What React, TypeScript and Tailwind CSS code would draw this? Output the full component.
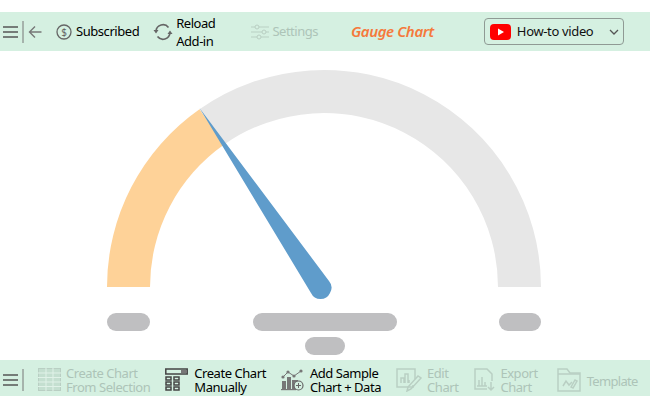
import React from 'react';

const font = "font-['Noto_Sans',sans-serif]";

function Hamburger() {
  return (
    <svg width="24" height="24" viewBox="0 0 24 24" className="shrink-0">
      <path d="M3 7h15M3 12h15M3 17h15" stroke="#555" strokeWidth="1.6" fill="none" />
      <path d="M23 1v22" stroke="#777" strokeWidth="1" fill="none" />
    </svg>
  );
}

function BottomItem({ label, active, icon, className }: { label: React.ReactNode; active?: boolean; icon: React.ReactNode; className: string }) {
  return (
    <div className={`flex items-center shrink-0 ${className}`}>
      {icon}
      <div className={`text-[13px] leading-[14px] tracking-[-0.45px] whitespace-nowrap ${active ? 'text-black' : 'text-[#adc4b8]'}`}>{label}</div>
    </div>
  );
}

export default function App() {
  return (
    <div className={`w-[650px] h-[407px] bg-white flex flex-col pt-3 overflow-hidden ${font}`}>
      {/* top ribbon */}
      <div className="h-[39px] bg-[#d5f0e1] flex items-center shrink-0">
        <div className="w-[24px]"><Hamburger /></div>
        <svg width="14" height="14" viewBox="0 0 14 14" className="ml-[4px]">
          <path d="M13.5 7H1.5M7 1.5L1.5 7 7 12.5" stroke="#777" strokeWidth="1.4" fill="none" />
        </svg>
        <svg width="16" height="16" viewBox="0 0 16 16" className="ml-[14px]">
          <circle cx="8" cy="8" r="7" stroke="#666" strokeWidth="1.3" fill="none" />
          <text x="8" y="11.5" textAnchor="middle" fontSize="10" fill="#666">$</text>
        </svg>
        <span className="ml-[4px] text-[13px] tracking-[-0.45px] text-black">Subscribed</span>
        <svg width="20" height="18" viewBox="0 0 20 18" className="ml-[14px]">
          <path d="M3 8a7 7 0 0 1 12.5-3.5M17 10a7 7 0 0 1-12.5 3.5" stroke="#666" strokeWidth="1.7" fill="none" />
          <path d="M0.5 7h5L3 10.5zM19.5 11h-5L17 7.5z" fill="#666" />
        </svg>
        <div className="ml-[3px] text-[13px] leading-[18px] tracking-[-0.45px] text-black">Reload<br />Add-in</div>
        <svg width="18" height="16" viewBox="0 0 18 16" className="ml-[36px]">
          <path d="M0 3h18M0 8h18M0 13h18" stroke="#b9cfc3" strokeWidth="1.2" />
          <circle cx="6" cy="3" r="2" fill="#d5f0e1" stroke="#b9cfc3" />
          <circle cx="13" cy="8" r="2" fill="#d5f0e1" stroke="#b9cfc3" />
          <circle cx="8" cy="13" r="2" fill="#d5f0e1" stroke="#b9cfc3" />
        </svg>
        <span className="ml-[3px] text-[13px] tracking-[-0.5px] text-[#adc4b8]">Settings</span>
        <span className="ml-[33px] text-[15px] italic font-semibold tracking-[-0.4px] text-[#f5793b]">Gauge Chart</span>
        <div className="ml-[50px] w-[140px] h-[27px] border border-[#8f9a94] rounded-[4px] flex items-center pl-[5px]">
          <svg width="21" height="16" viewBox="0 0 21 16">
            <rect width="21" height="16" rx="4" fill="#ff0000" />
            <path d="M8 4.5l6 3.5-6 3.5z" fill="#fff" />
          </svg>
          <span className="ml-[6px] text-[13px] tracking-[-0.35px] text-[#111]">How-to video</span>
          <svg width="10" height="6" viewBox="0 0 10 6" className="ml-[16px]">
            <path d="M1 1l4 4 4-4" stroke="#555" strokeWidth="1.3" fill="none" />
          </svg>
        </div>
      </div>

      {/* chart area */}
      <div className="flex-1 min-h-0">
        <svg width="650" height="309" viewBox="0 51 650 309" className="block">
          <path d="M199.5 109.2A217 217 0 0 1 541 287H498A174 174 0 0 0 224.2 144.5Z" fill="#e7e7e7" />
          <path d="M107 287A217 217 0 0 1 199.5 109.2L224.2 144.5A174 174 0 0 0 150 287Z" fill="#fed298" />
          <path d="M199.5 108L329 281A10.5 10.5 0 0 1 330 293A10.5 10.5 0 0 1 311 293Z" fill="#5f9ccb" />
          <rect x="107" y="313" width="43" height="18" rx="9" fill="#bfbfc1" />
          <rect x="253" y="313" width="144" height="18" rx="9" fill="#bfbfc1" />
          <rect x="499" y="313" width="42" height="18" rx="9" fill="#bfbfc1" />
          <rect x="305" y="337" width="40" height="18" rx="9" fill="#bfbfc1" />
        </svg>
      </div>

      {/* bottom ribbon */}
      <div className="h-[36px] bg-[#d5f0e1] flex items-center shrink-0 mb-[11px] pt-[3px]">
        <div className="w-[24px]"><Hamburger /></div>
        <BottomItem
          className="ml-[14px]"
          label={<>Create Chart<br />From Selection</>}
          icon={
            <svg width="23" height="23" viewBox="0 0 23 23" className="mr-[5px]">
              <rect x="0.5" y="0.5" width="22" height="22" fill="#c4dfd0" stroke="#b9cfc3" />
              <path d="M0 5h23M0 9.5h23M0 14h23M0 18.5h23M8 0v23M15 0v23" stroke="#e0f2e8" strokeWidth="1" />
            </svg>
          }
        />
        <BottomItem
          className="ml-[15px]"
          active
          label={<>Create Chart<br />Manually</>}
          icon={
            <svg width="23" height="23" viewBox="0 0 23 23" className="mr-[6px]">
              <g fill="none" stroke="#444" strokeWidth="1.5">
                <rect x="0.8" y="1" width="21.4" height="5" />
                <rect x="1" y="9" width="5" height="3" />
                <rect x="9" y="9" width="5" height="3" />
                <rect x="1" y="14" width="5" height="3" />
                <rect x="9" y="14" width="5" height="3" />
                <rect x="1" y="19" width="5" height="3" />
                <rect x="9" y="19" width="5" height="3" />
              </g>
              <rect x="16" y="2" width="6" height="3" fill="#777" />
            </svg>
          }
        />
        <BottomItem
          className="ml-[15px]"
          active
          label={<>Add Sample<br />Chart + Data</>}
          icon={
            <svg width="23" height="23" viewBox="0 0 23 23" className="mr-[6px]">
              <path d="M2 9l5-5 6 4 7-5" stroke="#777" strokeWidth="1" fill="none" />
              <g fill="#777">
                <circle cx="2" cy="9" r="1.6" />
                <circle cx="7" cy="4" r="1.6" />
                <circle cx="13" cy="8" r="1.6" />
                <circle cx="20" cy="3" r="1.6" />
                <rect x="1" y="13" width="4" height="8" />
                <rect x="6" y="9" width="4" height="12" />
                <rect x="11" y="12" width="6" height="9" />
                <rect x="0" y="21" width="15" height="1.2" />
              </g>
              <circle cx="17.5" cy="17.5" r="4.5" fill="#d5f0e1" stroke="#666" strokeWidth="1.2" />
              <path d="M15 17.5h5M17.5 15v5" stroke="#666" strokeWidth="1" />
            </svg>
          }
        />
        <BottomItem
          className="ml-[15px]"
          label={<>Edit<br />Chart</>}
          icon={
            <svg width="26" height="24" viewBox="0 0 26 24" className="mr-[5px]">
              <g fill="none" stroke="#b9cfc3" strokeWidth="1.5">
                <path d="M17 17v2H1V1h18v10" />
                <path d="M5 15v-5h3v5M9 15V6h3v9M13 15v-3" />
                <path d="M25 10l-10 11-4 2 1-4 10-11z" />
              </g>
            </svg>
          }
        />
        <BottomItem
          className="ml-[16px]"
          label={<>Export<br />Chart</>}
          icon={
            <svg width="21" height="24" viewBox="0 0 21 24" className="mr-[5px]">
              <g fill="none" stroke="#b9cfc3" strokeWidth="1.5">
                <path d="M13 21H1V1h12l5 5v7" />
                <path d="M5 18v-6M8 18V9M11 18v-4M3 18h10" />
                <path d="M17 14v8M14 19l3 3 3-3" />
              </g>
            </svg>
          }
        />
        <BottomItem
          className="ml-[19px]"
          label={<span className="block mt-[3px] tracking-[-0.7px]">Template</span>}
          icon={
            <svg width="24" height="24" viewBox="0 0 24 24" className="mr-[6px]">
              <g fill="none" stroke="#b9cfc3" strokeWidth="1.5">
                <path d="M1 23V1h9l3 4h10v18z" />
                <path d="M1 6h22" />
                <path d="M6 18l3-5 3 4 3-3" />
                <path d="M14 19l4-7 2 1-4 7z" />
              </g>
            </svg>
          }
        />
      </div>
    </div>
  );
}
